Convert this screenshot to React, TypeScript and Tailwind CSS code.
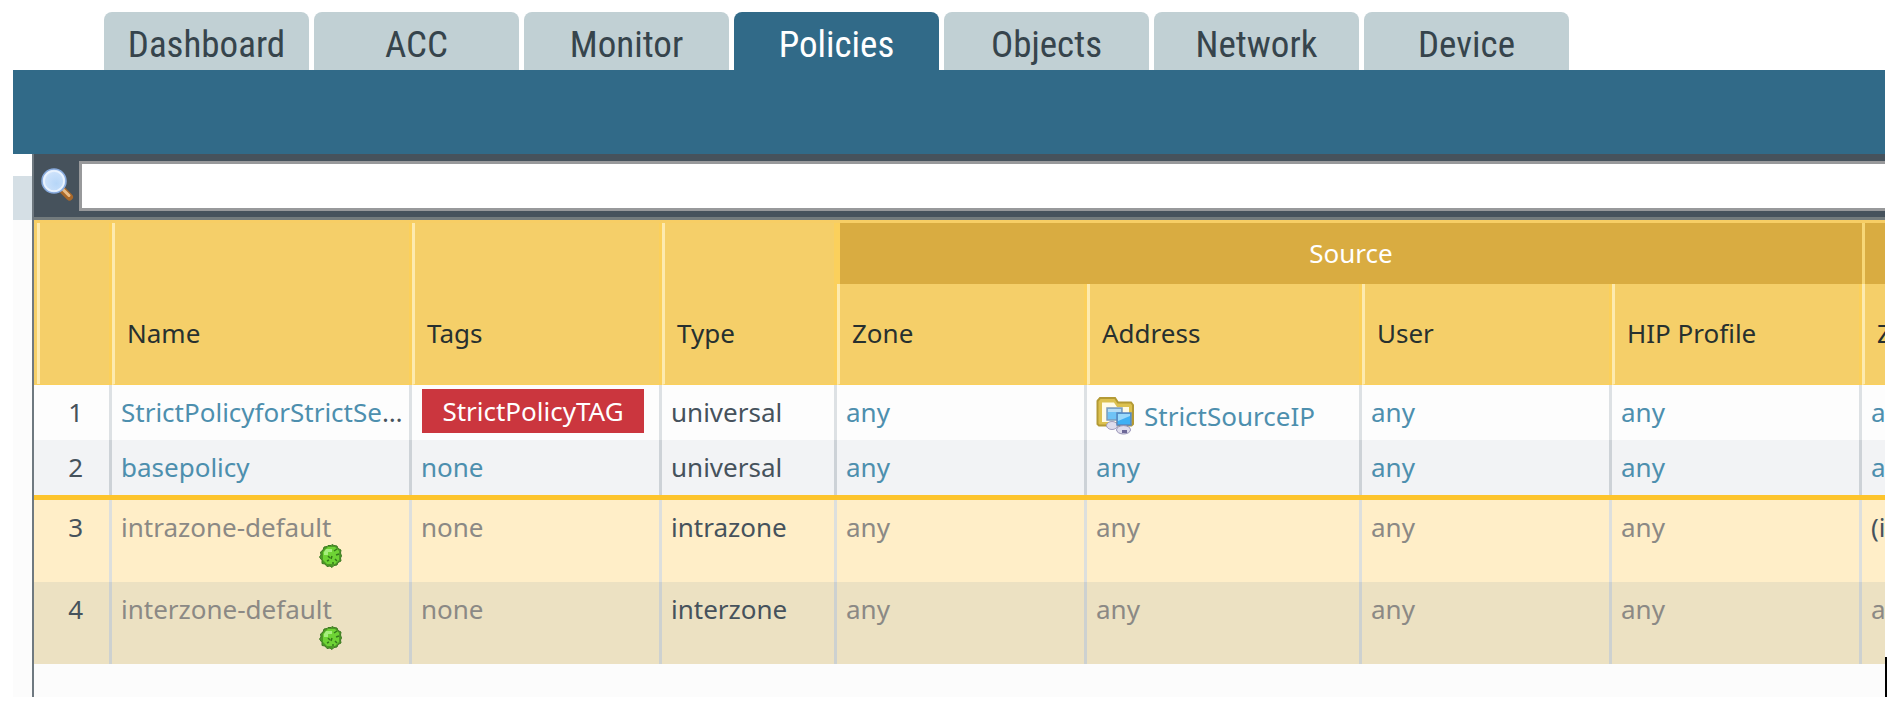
import React from "react";

const tabs = ["Dashboard", "ACC", "Monitor", "Policies", "Objects", "Network", "Device"];

type Rule = {
  id: number;
  name: string;
  truncated?: boolean;
  tag?: string;
  type: string;
  address?: string;
  destination: string;
  preset?: boolean;
  row: string;
  cell: string;
};

const rules: Rule[] = [
  {
    id: 1,
    name: "StrictPolicyforStrictSe",
    truncated: true,
    tag: "StrictPolicyTAG",
    type: "universal",
    address: "StrictSourceIP",
    destination: "any",
    row: "h-[55px] bg-[#fdfdfd]",
    cell: "shadow-[inset_-3px_0_#dde1e4]",
  },
  {
    id: 2,
    name: "basepolicy",
    type: "universal",
    destination: "any",
    row: "h-[55px] bg-[#f2f3f5]",
    cell: "shadow-[inset_-3px_0_#cdd2d7]",
  },
  {
    id: 3,
    name: "intrazone-default",
    type: "intrazone",
    destination: "(intrazone)",
    preset: true,
    row: "h-[87px] bg-[#ffeec8]",
    cell: "border-t-[5px] border-[#fdc42c] shadow-[inset_-3px_0_#dddfdd]",
  },
  {
    id: 4,
    name: "interzone-default",
    type: "interzone",
    destination: "any",
    preset: true,
    row: "h-[82px] bg-[#ece1c2]",
    cell: "shadow-[inset_-3px_0_#cdd1d0]",
  },
];

function SearchIcon() {
  return (
    <svg viewBox="0 0 34 36" className="h-9 w-[34px]" aria-hidden="true">
      <defs>
        <radialGradient id="lens" cx="60%" cy="60%" r="60%">
          <stop offset="0" stopColor="#b6d6f8" />
          <stop offset="0.75" stopColor="#cbe1fb" />
          <stop offset="1" stopColor="#dcebfd" />
        </radialGradient>
      </defs>
      <path d="M23 23.500 29.500 30" stroke="#a8682a" strokeWidth="7" strokeLinecap="round" />
      <path d="M23 22.500 29 28.500" stroke="#e8bc88" strokeWidth="3" strokeLinecap="round" />
      <circle cx="14" cy="14" r="12" fill="url(#lens)" stroke="#86a9dc" strokeWidth="1.600" />
      <circle cx="14" cy="14" r="10" fill="none" stroke="#eaf3fe" strokeWidth="1.600" />
    </svg>
  );
}

function AddressGroupIcon() {
  return (
    <svg viewBox="0 0 38 38" className="size-[38px] shrink-0" aria-hidden="true">
      <path d="M1.500 4 4 1h15l3 4.500h13L37 8v19l-1.500 1.500H3L1.500 27z" fill="#dcc150" stroke="#b39a35" strokeWidth="2" />
      <path d="M6 5.500h12l3 4.500h12V25H6z" fill="#fffbe6" />
      <path d="M11 11h15v12H11z" fill="#6fc3f6" stroke="#7f9cba" strokeWidth="1.500" />
      <path d="M12 12h13v3H12z" fill="#b5dcf5" />
      <ellipse cx="16" cy="28.500" rx="5.500" ry="4" fill="#dedcec" stroke="#a09cbc" />
      <path d="M21 16h14v12H21z" fill="#3fb0f4" stroke="#5b87bd" strokeWidth="1.500" />
      <path d="M22 17h12v2l-12 5z" fill="#9ad9fb" />
      <ellipse cx="27.500" cy="32.800" rx="7" ry="4.200" fill="#dedcec" stroke="#9490b4" />
      <path d="M26 33h5v3h-5z" fill="#6d6898" />
    </svg>
  );
}

function PresetIcon() {
  return (
    <svg viewBox="0 0 24 24" className="size-6" aria-hidden="true">
      <path
        d="M9 1.500h3l1-1 2 1 3 .5 1 2.500 3 1.500-.5 3 1 3-1 2 .5 3-3 1.500-1 2.500-3 .5-2 2-2-1.500-3 .5-2-2.500-3-.5v-3L.5 13l1.500-2-.5-3L4 6l1-3 3-.5z"
        fill="#4d9a26"
        stroke="#3d7a22"
      />
      <path d="M9 3h7l4 4v9l-4 4H8l-4-4V8z" fill="#6ed335" />
      <path d="M7 5h6v3H9v3H5V8z" fill="#a5ee7c" />
      <path d="M15 7l3-2M17 11l3-1M9 12l2 2M13 12l-1 3M16 15l2 2M8 17l2-1M14 18v2" stroke="#35791a" strokeWidth="1.500" />
    </svg>
  );
}

const headCell =
  "overflow-hidden whitespace-nowrap border-b border-l-[3px] border-b-[#fbd05c] border-l-[#fdeaae] bg-[#f5cf69] pb-[35px] pl-3 text-left align-bottom font-normal shadow-[inset_-3px_0_#fbd05c]";
const bodyCell = "whitespace-nowrap pt-[11px] pl-[9px] text-left align-top font-normal";

function RuleRow({ rule }: { rule: Rule }) {
  const cell = bodyCell + " " + rule.cell;
  const link = rule.preset ? "text-[#8b8985]" : "text-[#4d8fae]";
  const any = (
    <a href="#any" className={link}>
      any
    </a>
  );
  return (
    <tr className={rule.row}>
      <th scope="row" className={cell}>
        <span className="block w-10 text-right">{rule.id}</span>
      </th>
      <td className={cell}>
        <a href={"#rule-" + rule.id} className={link}>
          {rule.name}
        </a>
        {rule.truncated && "…"}
        {rule.preset && (
          <div className="pt-px pl-[198px]">
            <PresetIcon />
          </div>
        )}
      </td>
      {rule.tag ? (
        <td className={"pt-1 pl-2.5 align-top " + rule.cell}>
          <span className="flex h-11 w-[222px] items-center justify-center bg-[#cb363e] text-white">{rule.tag}</span>
        </td>
      ) : (
        <td className={cell}>
          <a href="#tags" className={link}>
            none
          </a>
        </td>
      )}
      <td className={cell}>{rule.type}</td>
      <td className={cell}>{any}</td>
      {rule.address ? (
        <td className={"pt-1.5 pl-[9px] align-middle whitespace-nowrap " + rule.cell}>
          <a href="#address" className={"flex items-center gap-2.5 " + link}>
            <AddressGroupIcon />
            {rule.address}
          </a>
        </td>
      ) : (
        <td className={cell}>{any}</td>
      )}
      <td className={cell}>{any}</td>
      <td className={cell}>{any}</td>
      <td className={"overflow-hidden pt-[11px] pl-[9px] align-top whitespace-nowrap " + (rule.id === 3 ? "border-t-[5px] border-[#fdc42c]" : "")}>
        {rule.destination === "any" ? any : rule.destination}
      </td>
    </tr>
  );
}

export default function App() {
  return (
    <div className="min-h-screen overflow-hidden bg-white pt-3 pr-2 pl-[13px] font-['Noto_Sans','DejaVu_Sans_Condensed',sans-serif] text-[26px] leading-8 text-[#46525c]">
      <nav className="mr-0.5 flex gap-[5px] pl-[91px]">
        {tabs.map((t) => (
          <a
            key={t}
            href={"#" + t.toLowerCase()}
            className={
              "flex h-[58px] w-[205px] items-center justify-center rounded-t-lg pt-2 font-['Roboto_Condensed','Arial_Narrow','Liberation_Sans',sans-serif] text-[37px] " +
              (t === "Policies" ? "bg-[#316a88] text-white" : "bg-[#c1d0d4] text-[#36444c]")
            }
          >
            {t}
          </a>
        ))}
      </nav>
      <div className="mr-0.5 h-[84px] bg-[#316a88]" />
      <div className="flex">
        <aside className="w-[19px] shrink-0 bg-[#fcfcfc]">
          <div className="h-[22px] bg-white" />
          <div className="h-11 bg-[#d5dfe5]" />
        </aside>
        <main className="min-w-0 flex-1 border-l-2 border-[#6f7980] bg-[#fcfcfc]">
          <div className="flex h-[66px] items-start border-b-[3px] border-[#737b7d] bg-[#46525c] pt-[7px]">
            <label htmlFor="filter" className="w-[45px] shrink-0 pt-1.5 pl-1.5">
              <SearchIcon />
            </label>
            <input
              id="filter"
              type="text"
              aria-label="Filter rules"
              className="h-[50px] min-w-0 flex-1 border-[3px] border-r-0 border-[#98999b] bg-white px-2 outline-none"
            />
          </div>
          <div className="border-t-[3px] border-[#f7ce65]">
            <table className="w-full table-fixed border-separate border-spacing-0">
              <colgroup>
                <col className="w-[78px]" />
                <col className="w-[300px]" />
                <col className="w-[250px]" />
                <col className="w-[175px]" />
                <col className="w-[250px]" />
                <col className="w-[275px]" />
                <col className="w-[250px]" />
                <col className="w-[250px]" />
                <col />
              </colgroup>
              <thead className="text-[#27302f]">
                <tr className="h-[61px]">
                  <td
                    rowSpan={2}
                    className="border-b border-l-[3px] border-b-[#fbd05c] border-l-[#f5cf69] bg-[#f5cf69] shadow-[inset_3px_0_#fdeaae,inset_-3px_0_#fbd05c]"
                  />
                  <th rowSpan={2} className={headCell}>Name</th>
                  <th rowSpan={2} className={headCell}>Tags</th>
                  <th rowSpan={2} className={headCell}>Type</th>
                  <th colSpan={4} className="border-l-[3px] border-[#fbd05c] bg-[#d9ac41] pb-0.5 text-center font-normal text-white">
                    Source
                  </th>
                  <td className="border-l-[3px] border-[#f7d777] bg-[#d9ac41]" />
                </tr>
                <tr className="h-[101px]">
                  <th className={headCell}>Zone</th>
                  <th className={headCell}>Address</th>
                  <th className={headCell}>User</th>
                  <th className={headCell}>HIP Profile</th>
                  <th className="overflow-hidden border-b border-l-[3px] border-b-[#fbd05c] border-l-[#fdeaae] bg-[#f5cf69] pb-[35px] pl-3 text-left align-bottom font-normal whitespace-nowrap">
                    Zone
                  </th>
                </tr>
              </thead>
              <tbody>
                {rules.map((r) => (
                  <RuleRow key={r.id} rule={r} />
                ))}
              </tbody>
            </table>
          </div>
          <div className="h-[33px]" />
        </main>
        <div className="flex w-0.5 shrink-0 flex-col justify-end">
          <div className="h-10 bg-black" />
        </div>
      </div>
    </div>
  );
}
